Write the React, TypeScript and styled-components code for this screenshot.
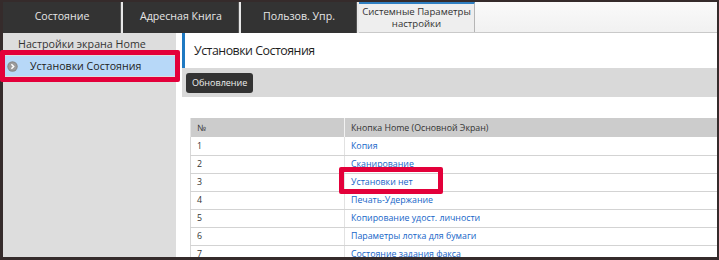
import React from "react";
import styled, { createGlobalStyle } from "styled-components";

const GlobalStyle = createGlobalStyle`
  html, body { margin: 0; padding: 0; background: #fff; }
  body { font-family: "Open Sans", "Noto Sans", sans-serif; color: #333; }
  * { box-sizing: border-box; }
`;

const Page = styled.div`
  position: relative;
  width: 719px;
  height: 260px;
`;

const Frame = styled.div`
  width: 719px;
  height: 260px;
  border: 2px solid #352b2b;
  border-left-width: 3px;
  border-bottom-width: 3px;
  display: flex;
  flex-direction: column;
  overflow: hidden;
  background: #fff;
`;

const TabBar = styled.div`
  height: 31px;
  display: flex;
  background: linear-gradient(#fafafa, #f1f1f1);
  border-bottom: 1px solid #c9c9c9;
  flex-shrink: 0;
`;

const Tab = styled.div<{ $active?: boolean }>`
  width: ${(p) => (p.$active ? "116px" : "118px")};
  height: ${(p) => (p.$active ? "30px" : "31px")};
  display: flex;
  align-items: center;
  justify-content: center;
  text-align: center;
  font-size: ${(p) => (p.$active ? "9.6px" : "10.6px")};
  line-height: ${(p) => (p.$active ? "12px" : "14px")};
  color: ${(p) => (p.$active ? "#333" : "#e6e6e6")};
  background: ${(p) => (p.$active ? "#eeeeee" : "#333333")};
  border-top: ${(p) => (p.$active ? "2px solid #2f7fc1" : "none")};
  border-right: ${(p) =>
    p.$active ? "1px solid #b5b5b5" : "2px solid #e8e8e8"};
  box-shadow: ${(p) => (p.$active ? "none" : "inset -1px 0 0 #555")};
  padding-bottom: ${(p) => (p.$active ? "1px" : "3px")};

  &:first-child {
    width: 120px;
  }
`;

const Body = styled.div`
  flex: 1;
  display: flex;
  min-height: 0;
`;

const Sidebar = styled.div`
  width: 173px;
  background: #dddddd;
  display: flex;
  flex-direction: column;
  flex-shrink: 0;
`;

const SideTitle = styled.div`
  height: 21px;
  padding-left: 15px;
  font-size: 10.7px;
  line-height: 22px;
  color: #333;
`;

const SideItem = styled.div<{ $selected?: boolean }>`
  height: 20px;
  margin-top: 2px;
  display: flex;
  align-items: center;
  gap: 12px;
  padding-left: 4px;
  font-size: 10.6px;
  color: #222;
  background: ${(p) => (p.$selected ? "#b7d8f8" : "transparent")};
`;

const Content = styled.div`
  flex: 1;
  display: flex;
  flex-direction: column;
  padding-left: 6px;
  min-width: 0;
`;

const Header = styled.div`
  height: 35px;
  display: flex;
  align-items: center;
  border-left: 3px solid #1f79c2;
  padding-left: 9px;
  padding-bottom: 1px;
  font-size: 12.4px;
  letter-spacing: -0.5px;
  color: #1e1e1e;
  background: #fff;
  flex-shrink: 0;
`;

const Toolbar = styled.div`
  height: 29px;
  background: #d9d9d9;
  display: flex;
  align-items: center;
  padding-left: 4px;
  flex-shrink: 0;
`;

const Button = styled.button`
  height: 20px;
  padding: 0 6px;
  border: none;
  border-radius: 3px;
  background: #333;
  color: #eee;
  font-family: inherit;
  font-size: 9px;
  line-height: 20px;
`;

const TableWrap = styled.div`
  padding: 21px 0 0 8px;
`;

const Table = styled.table`
  width: 100%;
  border-collapse: collapse;
  font-size: 8.8px;
`;

const Th = styled.th<{ $w?: number }>`
  height: 19px;
  background: #cccccc;
  font-weight: normal;
  text-align: left;
  padding: 0 0 0 6px;
  color: #333;
  width: ${(p) => (p.$w ? `${p.$w}px` : "auto")};
  border-left: ${(p) => (p.$w ? "1px solid #e4e4e4" : "1px solid #f2f2f2")};
`;

const Tr = styled.tr`
  height: 18px;
`;

const Td = styled.td<{ $first?: boolean }>`
  padding: 0 0 0 6px;
  line-height: 12px;
  border-bottom: 1px solid #d3d3d3;
  border-left: 1px solid ${(p) => (p.$first ? "#d8d8d8" : "#e2e2e2")};
  color: #333;
`;

const Link = styled.span`
  color: #1565c8;
`;

const Mark = styled.div<{ $x: number; $y: number; $w: number; $h: number }>`
  position: absolute;
  left: ${(p) => p.$x}px;
  top: ${(p) => p.$y}px;
  width: ${(p) => p.$w}px;
  height: ${(p) => p.$h}px;
  border: 5px solid #e3003a;
  border-radius: 2px;
  pointer-events: none;
`;

const ChevronIcon = () => (
  <svg width="11" height="11" viewBox="0 0 11 11">
    <circle cx="5.5" cy="5.5" r="5.2" fill="#8a8a8a" />
    <circle cx="5.5" cy="5.5" r="4" fill="#9c9c9c" />
    <path d="M4.4 3.2 L6.7 5.5 L4.4 7.8" fill="none" stroke="#fff" strokeWidth="1.5" />
  </svg>
);

const rows = [
  "Копия",
  "Сканирование",
  "Установки нет",
  "Печать-Удержание",
  "Копирование удост. личности",
  "Параметры лотка для бумаги",
  "Состояние задания факса",
];

export default function App() {
  return (
    <>
      <GlobalStyle />
      <Page>
        <Frame>
          <TabBar>
            <Tab>Состояние</Tab>
            <Tab>Адресная Книга</Tab>
            <Tab>Пользов. Упр.</Tab>
            <Tab $active>
              Системные Параметры
              <br />
              настройки
            </Tab>
          </TabBar>
          <Body>
            <Sidebar>
              <SideTitle>Настройки экрана Home</SideTitle>
              <SideItem $selected>
                <ChevronIcon />
                Установки Состояния
              </SideItem>
            </Sidebar>
            <Content>
              <Header>Установки Состояния</Header>
              <Toolbar>
                <Button>Обновление</Button>
              </Toolbar>
              <TableWrap>
                <Table>
                  <thead>
                    <tr>
                      <Th $w={154}>№</Th>
                      <Th>Кнопка Home (Основной Экран)</Th>
                    </tr>
                  </thead>
                  <tbody>
                    {rows.map((r, i) => (
                      <Tr key={r}>
                        <Td $first>{i + 1}</Td>
                        <Td>
                          <Link>{r}</Link>
                        </Td>
                      </Tr>
                    ))}
                  </tbody>
                </Table>
              </TableWrap>
            </Content>
          </Body>
        </Frame>
        <Mark $x={0} $y={50} $w={180} $h={32} />
        <Mark $x={339} $y={167} $w={104} $h={27} />
      </Page>
    </>
  );
}
